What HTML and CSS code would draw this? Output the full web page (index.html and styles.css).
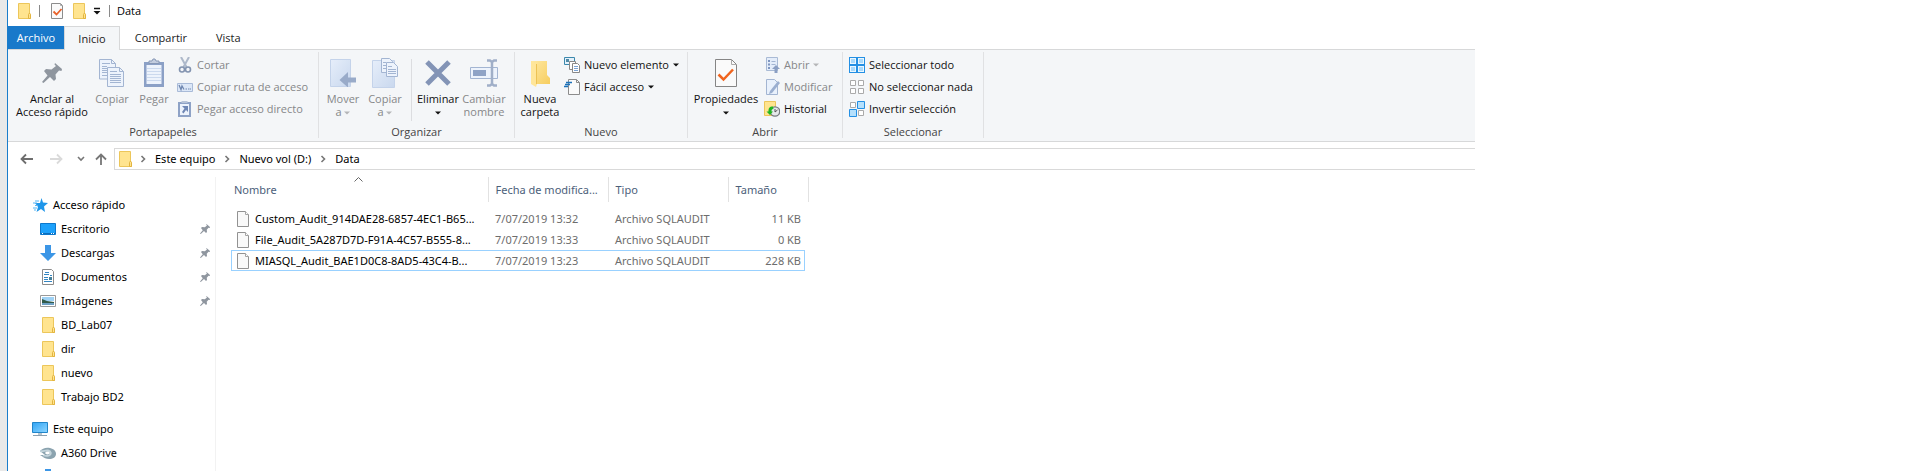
FILE: index.html
```html
<!DOCTYPE html>
<html lang="es">
<head>
<meta charset="utf-8">
<title>Data</title>
<link rel="stylesheet" href="styles.css">
</head>
<body>
<svg class="defs" aria-hidden="true">
  <defs>
    <linearGradient id="paper" x1="0" y1="0" x2="1" y2="1"><stop offset="0" stop-color="#e6eefa"/><stop offset="1" stop-color="#c9d8ee"/></linearGradient>
    <linearGradient id="gold" x1="0" y1="0" x2="1" y2="1"><stop offset="0" stop-color="#ffe9a2"/><stop offset="1" stop-color="#f6cd5f"/></linearGradient>
    <linearGradient id="screen" x1="0" y1="0" x2="1" y2="1"><stop offset="0" stop-color="#2fa4f5"/><stop offset="1" stop-color="#8fd6ff"/></linearGradient>
  </defs>
  <symbol id="folder" viewBox="0 0 16 16"><path d="M2.500.5h11v10l1 1v4h-12z" fill="#ffe48f" stroke="#ecc65a"/><path d="M12.500 15.500v-4l1-1.500 1 1.500v4z" fill="#ffe48f" stroke="#e3b440"/></symbol>
  <symbol id="check" viewBox="0 0 16 16"><path d="M2.500.5h9l2 2v13h-11z" fill="#fafafa" stroke="#8c8c8c"/><path d="M11.500.5v2h2" fill="none" stroke="#aaa"/><path d="M4.500 8.500l3 3 5-5.500" fill="none" stroke="#e8622a" stroke-width="1.800"/></symbol>
  <symbol id="pin" viewBox="0 0 20 20"><path d="M13 0l7 6-.5 2-2.500-.5-3.500 4 .5 4.500-2 2-4-4L1.500 20 0 19l5.500-6.500L2 8l2-2 5.500.5L14 3l-1.500-1.500z" fill="#8f969f"/></symbol>
  <symbol id="page" viewBox="0 0 16 16"><path d="M2.500.5h8l3 3v12h-11z" fill="#f9f9f9" stroke="#929292"/><path d="M10.500.5v3h3" fill="#fff" stroke="#a4a4a4"/></symbol>
  <symbol id="chev" viewBox="0 0 6 8"><path d="M1.500 1l3 3-3 3" fill="none" stroke="#777" stroke-width="1.600"/></symbol>
  <symbol id="drop" viewBox="0 0 6 4"><path d="M0 .5h6L3 3.500z" fill="currentColor"/></symbol>
  <symbol id="sheets" viewBox="0 0 26 28"><g fill="#edf3fc" stroke="#a3b5d2"><path d="M.5.500h12l4 4v15.500H.5z"/><path d="M8.500 8.500h12l4 4v15h-16z"/><path d="M12.500.5v4h4M20.500 8.500v4h4" fill="none"/></g><path d="M3 4.500h8M3 7.500h5M3 9.500h5M3 11.500h5M3 13.500h5M3 16.500h5M11 12.500h7M11 15.500h11M11 17.500h11M11 19.500h11M11 21.500h11M11 23.500h11" stroke="#a3b5d2"/></symbol>
  <symbol id="arrowdown" viewBox="0 0 16 16"><path d="M5 0h6v8h5l-8 8-8-8h5z" fill="#3c96e6"/></symbol>
</svg>

<div class="window">
  <header class="titlebar">
    <svg class="i16"><use href="#folder"/></svg>
    <span class="bar bar-first"></span>
    <button class="plain" aria-label="Propiedades"><svg class="i16"><use href="#check"/></svg></button>
    <button class="plain" aria-label="Nueva carpeta"><svg class="i16"><use href="#folder"/></svg></button>
    <button class="plain" aria-label="Personalizar"><svg class="custom" viewBox="0 0 8 8"><path d="M1 1.500h6" stroke="#111" stroke-width="1.500"/><path d="M.5 4h7L4 7.500z" fill="#111"/></svg></button>
    <span class="bar"></span>
    <span class="title">Data</span>
  </header>

  <nav class="tabs" aria-label="Cinta">
    <button class="tab file">Archivo</button>
    <button class="tab active">Inicio</button>
    <button class="tab share">Compartir</button>
    <button class="tab">Vista</button>
  </nav>

  <section class="ribbon">
    <div class="group clipboard">
      <div class="tools">
        <button class="big w78"><span class="pic"><svg width="20" height="20"><use href="#pin"/></svg></span>Anclar al<br>Acceso rápido</button>
        <button class="big w42 off"><span class="pic"><svg width="26" height="28"><use href="#sheets"/></svg></span>Copiar</button>
        <button class="big w42 off"><span class="pic"><svg width="22" height="30" viewBox="0 0 22 30"><path d="M1 4h20v25H1z" fill="#8ba0c6"/><path d="M3.500 7h15v19h-15z" fill="#edf3fc"/><path d="M6 5.500V3h3l1-2h2l1 2h3v2.500z" fill="#c3cddf" stroke="#8798b6"/><path d="M4 10.500h14M4 13.500h14M4 16.500h14M4 19.500h14M4 22.500h14" stroke="#cbd9ee"/></svg></span>Pegar</button>
        <div class="small">
          <button class="row off"><svg class="i16" viewBox="0 0 16 16"><path d="M4 0l5.500 10M12 0L6.500 10" stroke="#aeb9ca" stroke-width="2"/><circle cx="5" cy="12.500" r="2.500" fill="none" stroke="#8394b0" stroke-width="1.600"/><circle cx="11" cy="12.500" r="2.500" fill="none" stroke="#8394b0" stroke-width="1.600"/></svg>Cortar</button>
          <button class="row off"><svg class="i16" viewBox="0 0 16 16"><path d="M.5 4.500h15v8H.5z" fill="#dce7f7" stroke="#a9bbd8"/><path d="M2 6l2 4.500L5 7l2 3.500" fill="none" stroke="#6f87b0" stroke-width="1.300"/><path d="M8.500 10h1.500M11 10h1.500M13 10h1" stroke="#6f87b0"/></svg>Copiar ruta de acceso</button>
          <button class="row off"><svg class="i16" viewBox="0 0 16 16"><path d="M1 1h13v15H1z" fill="#8ea2c6"/><path d="M3 3h9v11H3z" fill="#edf3fc"/><path d="M4.500 0h6v2h-6z" fill="#b8c4d8"/><path d="M5 5h6v6L9 9l-2.500 3.500L5 11l2.500-3.500z" fill="#6f87b5"/></svg>Pegar acceso directo</button>
        </div>
      </div>
      <h2>Portapapeles</h2>
    </div>

    <div class="group organize">
      <div class="tools">
        <button class="big w42 off"><span class="pic"><svg width="26" height="28" viewBox="0 0 26 28"><path d="M.5.500h20v27H.5z" fill="url(#paper)" stroke="#c4d3ea"/><path d="M26 18.500h-8V13l-8.500 8L18 28.500v-5h8z" fill="#99abc9"/></svg></span>Mover<br>a <svg class="drop"><use href="#drop"/></svg></button>
        <button class="big w42 off"><span class="pic"><svg width="26" height="30" viewBox="0 0 26 30"><path d="M.5 2.500h22v27H.5z" fill="url(#paper)" stroke="#c4d3ea"/><g fill="#edf3fc" stroke="#a3b5d2"><path d="M9.500.5h8l3 3v11h-11z"/><path d="M14.500 4.500h7l4 4v10h-11z"/></g><path d="M11 4.500h3M11 7.500h3M11 10.500h3M16 8.500h4M16 11.500h8M16 13.500h8M16 15.500h8" stroke="#a3b5d2"/></svg></span>Copiar<br>a <svg class="drop"><use href="#drop"/></svg></button>
        <span class="divider"></span>
        <button class="big w44"><span class="pic"><svg width="26" height="26" viewBox="0 0 26 26"><path d="M2 2l22 22M24 2L2 24" stroke="#8394b6" stroke-width="5"/></svg></span>Eliminar<br><svg class="drop"><use href="#drop"/></svg></button>
        <button class="big w48 off"><span class="pic"><svg width="28" height="28" viewBox="0 0 28 28"><path d="M.5 8.500h27v11H.5z" fill="#edf3fc" stroke="#a3b5d2"/><path d="M3 11h13v6H3z" fill="#8fa3c6"/><path d="M17 1.500h3l2 1.500 2-1.500h3M17 26.500h3l2-1.500 2 1.500h3M22 3v22" fill="none" stroke="#a0afc8" stroke-width="2.500"/></svg></span>Cambiar<br>nombre</button>
      </div>
      <h2>Organizar</h2>
    </div>

    <div class="group">
      <div class="tools">
        <button class="big w42"><span class="pic"><svg width="20" height="28" viewBox="0 0 20 28"><path d="M1 2h16v14l3 3v6H1z" fill="url(#gold)"/><path d="M1 2l6 3v20l-1 3-5-3z" fill="#ffe69a"/><path d="M6.500 5v20" stroke="#ecc255"/></svg></span>Nueva<br>carpeta</button>
        <div class="small">
          <button class="row"><svg class="i16" viewBox="0 0 16 16"><path d="M.5.500h10v7H.5z" fill="#e4f1fb" stroke="#3c88ad"/><path d="M2 2h3v3H2z" fill="#508aa5"/><path d="M5.500 4.500h6v8h-6z" fill="#fff" stroke="#888"/><path d="M8.500 6.500h5l2 2v7h-7z" fill="#fff" stroke="#888"/><path d="M10 9.500h4M10 11.500h4M10 13.500h4" stroke="#7aa3d5"/></svg>Nuevo elemento <svg class="drop"><use href="#drop"/></svg></button>
          <button class="row"><svg class="i16" viewBox="0 0 16 16"><path d="M4.500.5h8l3 3v12h-11z" fill="#fafafa" stroke="#8c8c8c"/><path d="M12.500.5v3h3" fill="none" stroke="#8c8c8c"/><path d="M2 3.500h6M1 5.500h5M0 7.500h4" stroke="#1d72b8" stroke-width="1.400"/></svg>Fácil acceso <svg class="drop"><use href="#drop"/></svg></button>
        </div>
      </div>
      <h2>Nuevo</h2>
    </div>

    <div class="group open">
      <div class="tools">
        <button class="big w68"><span class="pic"><svg width="22" height="28" viewBox="0 0 22 28"><path d="M.5.500h16l5 5v22H.5z" fill="#fafafa" stroke="#858585"/><path d="M16.500.5v5h5" fill="none" stroke="#aaa"/><path d="M3.500 15.500l5 5L18 10.500" fill="none" stroke="#f0641e" stroke-width="2.500"/></svg></span>Propiedades<br><svg class="drop"><use href="#drop"/></svg></button>
        <div class="small">
          <button class="row off"><svg class="i16" viewBox="0 0 16 16"><path d="M2.500.5h11v13h-11z" fill="#e4edfa" stroke="#a9bad5"/><path d="M4 3h2v2H4zM4 6.500h2v2H4zM4 10h2v2H4z" fill="#7f96c0"/><path d="M7.500 4.500h4M7.500 7.500h4" stroke="#a3b5d2"/><path d="M8 12l4-4 4 4h-2.500v4h-3v-4z" fill="#8b9fc3"/></svg>Abrir <svg class="drop"><use href="#drop"/></svg></button>
          <button class="row off"><svg class="i16" viewBox="0 0 16 16"><path d="M2.500.5h8l3 3v12h-11z" fill="#e9f1fc" stroke="#a3b5d2"/><path d="M14 2l2 2-8 10-3 1 1-3z" fill="#9bafd0"/></svg>Modificar</button>
          <button class="row"><svg class="i16" viewBox="0 0 16 16"><path d="M.5.500h11v14H.5z" fill="#ffe48f" stroke="#ecc65a"/><circle cx="11" cy="10.500" r="4.700" fill="#e5e8ea" stroke="#767b80" stroke-width="1.300"/><path d="M11 8v3l2.500-2" fill="none" stroke="#555"/><path d="M9 5.500c-4 0-4.500 2-4.500 5H2.500L6 14l3-3.500H7.500c0-1.500 0-2.500 2-2.500z" fill="#22b522"/></svg>Historial</button>
        </div>
      </div>
      <h2>Abrir</h2>
    </div>

    <div class="group select">
      <div class="tools">
        <div class="small">
          <button class="row"><svg class="i16" viewBox="0 0 16 16"><path d="M0 0h16v16H0z" fill="#2490e4"/><path d="M1 1h6v6H1zM9 1h6v6H9zM1 9h6v6H1zM9 9h6v6H9z" fill="#eaf7ff"/><path d="M2 2h4v4H2zM10 2h4v4h-4zM2 10h4v4H2zM10 10h4v4h-4z" fill="#a9dafb"/></svg>Seleccionar todo</button>
          <button class="row"><svg class="i16" viewBox="0 0 16 16"><path d="M1.500 1.500h5v5h-5zM9.500 1.500h5v5h-5zM1.500 9.500h5v5h-5zM9.500 9.500h5v5h-5z" fill="#fff" stroke="#aaa"/></svg>No seleccionar nada</button>
          <button class="row"><svg class="i16" viewBox="0 0 16 16"><path d="M1.500 1.500h5v5h-5zM9.500 9.500h5v5h-5z" fill="#fff" stroke="#aaa"/><path d="M8.500.5h7v7h-7zM.5 8.500h7v7h-7z" fill="#b5e0fc" stroke="#2490e4"/></svg>Invertir selección</button>
        </div>
      </div>
      <h2>Seleccionar</h2>
    </div>
  </section>

  <nav class="address">
    <button class="plain nav-back" aria-label="Atrás"><svg width="13" height="12" viewBox="0 0 13 12"><path d="M13 6H1.500M6 1.500L1.500 6 6 10.500" fill="none" stroke="#6e6e6e" stroke-width="1.800"/></svg></button>
    <button class="plain nav-next" aria-label="Adelante" disabled><svg width="13" height="12" viewBox="0 0 13 12"><path d="M0 6h11.500M7 1.500L11.500 6 7 10.500" fill="none" stroke="#dadada" stroke-width="1.800"/></svg></button>
    <button class="plain nav-recent" aria-label="Ubicaciones recientes"><svg width="8" height="6" viewBox="0 0 8 6"><path d="M1 1l3 3 3-3" fill="none" stroke="#777" stroke-width="1.600"/></svg></button>
    <button class="plain nav-up" aria-label="Subir"><svg width="12" height="13" viewBox="0 0 12 13"><path d="M6 12V1.500M1 6.500l5-5 5 5" fill="none" stroke="#777" stroke-width="1.800"/></svg></button>
    <div class="path">
      <svg class="i16"><use href="#folder"/></svg>
      <svg class="chev"><use href="#chev"/></svg><a href="#equipo">Este equipo</a>
      <svg class="chev"><use href="#chev"/></svg><a href="#vol">Nuevo vol (D:)</a>
      <svg class="chev"><use href="#chev"/></svg><a href="#data">Data</a>
    </div>
  </nav>

  <div class="content">
    <aside class="tree">
      <a class="node root" href="#rapido"><svg class="i16" viewBox="0 0 16 16"><path d="M9.500 1l1.500 4.500 5 .5-4 3.500 1 5.500-4-3-4.500 3 1.500-5L3 6h5z" fill="#1e96ea"/><path d="M3 4h4M1 6h4M3 8.500h3M1 11h4M2 13h2" stroke="#55b4f3"/></svg>Acceso rápido</a>
      <a class="node" href="#escritorio"><svg class="i16" viewBox="0 0 16 16"><path d="M.5 2.500h15v11H.5z" fill="#1da1fb" stroke="#0d78cc"/><path d="M1 12.500h14" stroke="#0c6dbb"/><path d="M2 12.500h1M11 12.500h1M13 12.500h1" stroke="#fff"/></svg>Escritorio<svg class="pinned"><use href="#pin"/></svg></a>
      <a class="node" href="#descargas"><svg class="i16"><use href="#arrowdown"/></svg>Descargas<svg class="pinned"><use href="#pin"/></svg></a>
      <a class="node" href="#documentos"><svg class="i16" viewBox="0 0 16 16"><path d="M2.500.5h9l2 2v13h-11z" fill="#fff" stroke="#8c8c8c"/><path d="M5 3.500h4M4 5.500h5M4 8.500h4M4 10.500h4M4 12.500h8M10 6.500h2" stroke="#3486c2"/><path d="M9 8h3v3H9z" fill="#457f99"/></svg>Documentos<svg class="pinned"><use href="#pin"/></svg></a>
      <a class="node" href="#imagenes"><svg class="i16" viewBox="0 0 16 16"><path d="M.5 2.500h15v11H.5z" fill="#fff" stroke="#999"/><path d="M2 4h12v4H2z" fill="#9fd2f5"/><path d="M2 6l5 2 7 1v1H2z" fill="#315a4a"/><path d="M2 10h12v2H2z" fill="#6da0c4"/></svg>Imágenes<svg class="pinned"><use href="#pin"/></svg></a>
      <a class="node" href="#lab"><svg class="i16"><use href="#folder"/></svg>BD_Lab07</a>
      <a class="node" href="#dir"><svg class="i16"><use href="#folder"/></svg>dir</a>
      <a class="node" href="#nuevo"><svg class="i16"><use href="#folder"/></svg>nuevo</a>
      <a class="node" href="#trabajo"><svg class="i16"><use href="#folder"/></svg>Trabajo BD2</a>
      <a class="node root second" href="#pc"><svg class="i16" viewBox="0 0 16 16"><path d="M.5 1.500h15v10H.5z" fill="url(#screen)" stroke="#2185c9"/><path d="M6 12h4v2H6z" fill="#b9c5ce"/><path d="M1 14.500h14" stroke="#8aa0b0"/></svg>Este equipo</a>
      <a class="node" href="#a360"><svg class="i16" viewBox="0 0 16 16"><path d="M0 6c2-2.500 6-4 10-3 4 .8 6 3.500 6 6 0 3-3 5-7 5-3 0-5-1-6.500-2.500L0 10h5z" fill="#8ba3af"/><path d="M0 6c3 1 5-1 8-.5S12 9 9 10.500c-2 .8-4 .5-6 0" fill="none" stroke="#c3d4db" stroke-width="1.800"/><ellipse cx="7.500" cy="8" rx="2.300" ry="1.400" fill="#fff"/></svg>A360 Drive</a>
      <a class="node" href="#descargas2" aria-label="Descargas"><svg class="i16"><use href="#arrowdown"/></svg></a>
    </aside>

    <main class="files">
      <table>
        <colgroup><col class="c-name"><col class="c-date"><col class="c-type"><col class="c-size"></colgroup>
        <thead>
          <tr><th>Nombre<svg class="sort" viewBox="0 0 9 5"><path d="M.5 4.500l4-4 4 4" fill="none" stroke="#666"/></svg></th><th>Fecha de modifica...</th><th>Tipo</th><th>Tamaño</th></tr>
        </thead>
        <tbody>
          <tr><td><span class="name"><svg class="i16"><use href="#page"/></svg>Custom_Audit_914DAE28-6857-4EC1-B65...</span></td><td>7/07/2019 13:32</td><td>Archivo SQLAUDIT</td><td>11 KB</td></tr>
          <tr><td><span class="name"><svg class="i16"><use href="#page"/></svg>File_Audit_5A287D7D-F91A-4C57-B555-8...</span></td><td>7/07/2019 13:33</td><td>Archivo SQLAUDIT</td><td>0 KB</td></tr>
          <tr class="focused"><td><span class="name"><svg class="i16"><use href="#page"/></svg>MIASQL_Audit_BAE1D0C8-8AD5-43C4-B...</span></td><td>7/07/2019 13:23</td><td>Archivo SQLAUDIT</td><td>228 KB</td></tr>
        </tbody>
      </table>
    </main>
  </div>
</div>
</body>
</html>
```

FILE: styles.css
```css
* { box-sizing: border-box; }
html, body { height: 100%; }
body {
  margin: 0;
  overflow: hidden;
  background: #fff;
  color: #000;
  font: 11px/16px "Open Sans", "Noto Sans", sans-serif;
}
button {
  margin: 0;
  padding: 0;
  border: 0;
  background: none;
  color: inherit;
  font: inherit;
  white-space: nowrap;
}
a { color: inherit; text-decoration: none; white-space: nowrap; }
svg { flex: none; }
.defs { position: absolute; width: 0; height: 0; }
.i16 { display: block; width: 16px; height: 16px; }
.plain { display: flex; align-items: center; }

.window {
  display: flex;
  flex-direction: column;
  width: 76.95%;
  min-height: 100%;
  border-left: 7px solid #e9e9e9;
  box-shadow: inset 1px 0 #1a7dcb;
  padding-left: 1px;
}

/* title bar */
.titlebar { display: flex; align-items: center; height: 26px; padding: 0 0 4px 8px; }
.titlebar .bar { width: 1px; height: 12px; margin: 0 7px 0 8px; background: #8a8a8a; }
.titlebar .bar-first { margin: 0 9px 0 7px; }
.titlebar .plain + .plain { margin-left: 6px; }
.titlebar .custom { width: 8px; height: 8px; }

/* tabs */
.tabs { display: flex; height: 24px; border-bottom: 1px solid #d7d8d9; }
.tab { height: 23px; padding: 0 14px; color: #222; }
.tab.file { width: 56px; padding: 0; background: #1979ca; color: #fff; }
.tab.active { width: 56px; height: 24px; padding: 0; border: 1px solid #d7d8d9; border-bottom: 0; background: #f4f6f8; }
.tab.share { width: 82px; padding: 0; }

/* ribbon */
.ribbon { display: flex; height: 92px; background: #f4f6f8; border-bottom: 1px solid #d7d8d9; padding-top: 2px; }
.group { display: flex; flex-direction: column; height: 86px; padding: 0 4px; border-right: 1px solid #e0e1e3; }
.group:nth-child(1) { width: 311px; }
.group:nth-child(2) { width: 196px; }
.group:nth-child(3) { width: 173px; }
.group:nth-child(4) { width: 155px; }
.group:nth-child(5) { width: 141px; }
.clipboard { padding: 0 5px; }
.organize { padding: 0 3px; }
.group h2 { margin: 0; font-size: 11px; line-height: 14px; font-weight: 400; text-align: center; color: #444; }
.tools { display: flex; height: 73px; flex: none; }
.big { display: block; align-self: flex-start; padding-top: 5px; line-height: 13px; color: #111; text-align: center; }
.pic { display: flex; align-items: center; justify-content: center; height: 32px; margin-bottom: 3px; }
.w42 { width: 42px; }
.w44 { width: 44px; }
.w48 { width: 48px; }
.w68 { width: 68px; }
.w78 { width: 78px; }
.big.off, .row.off { color: #868789; }
.off .drop { color: #b4b5b7; }
.drop { display: inline-block; width: 6px; height: 4px; vertical-align: middle; }
.small { display: flex; flex-direction: column; padding: 2px 0 0 3px; }
.clipboard .small, .select .small { padding-left: 2px; }
.open .small { padding-left: 4px; }
.row { display: flex; align-items: center; gap: 4px; height: 22px; color: #111; }
.divider { width: 1px; height: 62px; margin: 7px 4px 0 5px; background: #dcdde0; }

/* address bar */
.address { display: flex; align-items: center; height: 34px; padding: 6px 0 6px 12px; }
.nav-next { margin-left: 17px; }
.nav-recent { margin-left: 14px; }
.nav-up { margin-left: 10px; }
.path { display: flex; flex: 1; align-items: center; height: 22px; margin-left: 7px; padding-left: 2px; border: 1px solid #d9d9d9; border-right: 0; font-family: "Noto Sans", "Open Sans", sans-serif; }
.path .chev { width: 6px; height: 8px; margin: 0 9px; }
.path .i16 + .chev { margin-left: 7px; }

/* content */
.content { display: flex; flex: 1; height: 295px; overflow: hidden; font-family: "Noto Sans", "Open Sans", sans-serif; }
.tree { width: 208px; margin-top: 1px; padding-top: 16px; border-right: 1px solid #f2f2f2; }
.node { display: flex; align-items: center; gap: 5px; height: 24px; padding: 0 5px 0 32px; }
.node.root { padding-left: 24px; }
.node.second { margin-top: 8px; }
.pinned { width: 10px; height: 10px; margin-left: auto; }

.files { flex: 1; padding: 1px 0 0 15px; }
table { width: 577px; border-collapse: collapse; table-layout: fixed; }
.c-name { width: 257px; }
.c-date, .c-type { width: 120px; }
.c-size { width: 80px; }
th {
  position: relative;
  height: 25px;
  padding: 0 0 0 7px;
  border-right: 1px solid #e2e2e2;
  color: #4c607a;
  font-weight: 400;
  text-align: left;
  white-space: nowrap;
}
th:first-child { padding-left: 3px; }
.sort { position: absolute; top: 0; left: 48%; width: 9px; height: 5px; }
thead::after { content: ""; display: block; height: 6px; }
td { height: 21px; padding: 0 0 0 7px; color: #6d6d6d; white-space: nowrap; }
td:first-child { color: #000; padding-left: 4px; }
td:last-child { padding: 0 7px 0 0; text-align: right; }
.name { display: flex; align-items: center; gap: 4px; }
.focused { position: relative; }
.focused::after { content: ""; position: absolute; inset: 0 3px 0 0; border: 1px solid #99d1ff; }
```
